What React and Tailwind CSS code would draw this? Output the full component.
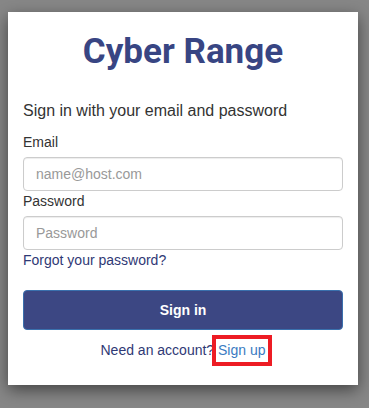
import React from "react";

export default function App() {
  return (
    <div className="w-full h-[408px] bg-[#878787] pt-[12px] pl-[8px] font-['Liberation_Sans',Arial,sans-serif] text-[14px] leading-[20px] text-[#333]">
      <div className="w-[350px] h-[373px] bg-white shadow-[0_5px_15px_rgba(0,0,0,0.5)] px-[15px] pt-[19px]">
        <h1 className="text-center font-['Roboto',sans-serif] font-bold text-[35px] leading-[42px] text-[#384583]">
          Cyber Range
        </h1>

        <p className="mt-[27px] text-[16px] leading-[22px] text-[#333]">
          Sign in with your email and password
        </p>

        <form className="mt-[10px]" onSubmit={(e) => e.preventDefault()}>
          <label className="block mb-[5px]">Email</label>
          <input
            type="email"
            placeholder="name@host.com"
            className="block w-full h-[34px] px-[12px] border border-[#ccc] rounded-[4px] text-[14px] placeholder:text-[#999] shadow-[inset_0_1px_1px_rgba(0,0,0,0.075)]"
          />
          <label className="block mb-[5px]">Password</label>
          <input
            type="password"
            placeholder="Password"
            className="block w-full h-[34px] px-[12px] border border-[#ccc] rounded-[4px] text-[14px] placeholder:text-[#999] shadow-[inset_0_1px_1px_rgba(0,0,0,0.075)]"
          />
          <a href="#" className="block text-[#2f3975]">
            Forgot your password?
          </a>

          <button
            type="submit"
            className="block w-full h-[40px] mt-[20px] bg-[#3c4783] border border-[#3a70ad] rounded-[4px] text-white font-bold text-[14px]"
          >
            Sign in
          </button>
        </form>

        <div className="mt-[10px] text-center text-[#2f3975]">
          Need an account?{" "}
          <span className="relative text-[#3a7bc2]">
            Sign up
            <span className="absolute -left-[6px] -right-[6px] -top-[7px] -bottom-[8px] border-4 border-[#ed1c24]"></span>
          </span>
        </div>
      </div>
    </div>
  );
}
